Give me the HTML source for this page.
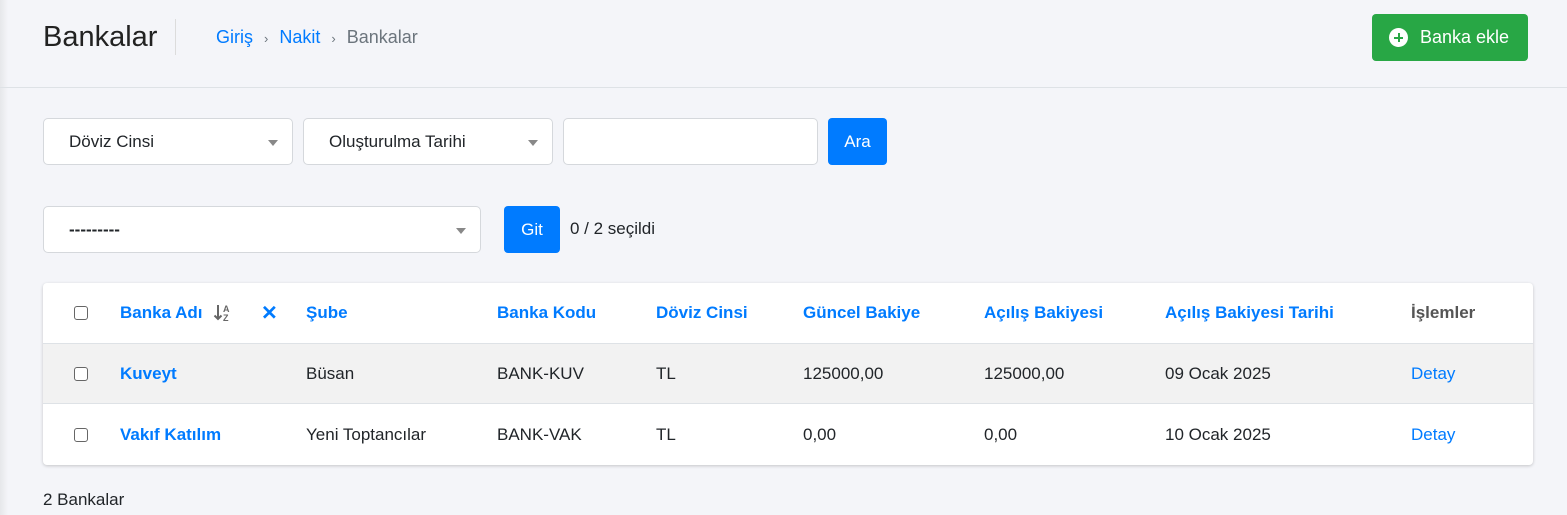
<!DOCTYPE html>
<html><head><meta charset="utf-8"><style>
*{box-sizing:border-box;margin:0;padding:0}
body{width:1567px;height:515px;overflow:hidden;background:#f4f5f9;font-family:"Liberation Sans",sans-serif;color:#212529;position:relative;font-size:16px}
.abs{position:absolute}
.hdr{left:0;top:0;width:1567px;height:88px;border-bottom:1px solid #dee2e6}
.sel{background:#fff;border:1px solid #d5d8dc;border-radius:5px;height:47px;display:flex;align-items:center;padding-left:25px;font-size:17px}
.car{position:absolute;right:14px;top:21px;width:0;height:0;border-left:5px solid transparent;border-right:5px solid transparent;border-top:6px solid #888}
.btn{background:#007bff;color:#fff;border-radius:4px;display:flex;align-items:center;justify-content:center;font-size:17px}
.card{left:43px;top:283px;width:1490px;height:182px;background:#fff;border-radius:4px;box-shadow:0 1px 3px rgba(0,0,0,.2)}
.row{position:absolute;left:0;width:1490px;height:61px}
.row span{position:absolute;top:50%;transform:translateY(-50%);white-space:nowrap;font-size:17px}
.b{color:#007bff;font-weight:bold}
.l{color:#007bff}
.cb{width:14px;height:14px;border:1px solid #666;border-radius:3px;background:#fff}
</style></head><body>
<div class="abs" style="left:0;top:0;width:8px;height:515px;background:linear-gradient(90deg,#e6e7ea,#f4f5f9)"></div>
<div class="abs hdr"></div>
<div class="abs" style="left:43px;top:21px;font-size:29px;color:#222">Bankalar</div>
<div class="abs" style="left:175px;top:19px;width:1px;height:36px;background:#dcdcdc"></div>
<div class="abs" style="left:216px;top:27px;font-size:18px;color:#6c757d"><span style="color:#007bff">Giriş</span> <span style="font-size:13px;margin:0 6px">›</span> <span style="color:#007bff">Nakit</span> <span style="font-size:13px;margin:0 6px">›</span> Bankalar</div>
<div class="abs" style="left:1372px;top:14px;width:156px;height:47px;background:#28a745;border-radius:4px;color:#fff;font-size:18px;display:flex;align-items:center">
<div style="width:19px;height:19px;border-radius:50%;background:#fff;margin-left:17px;margin-right:12px;position:relative"><div style="position:absolute;left:5px;top:8.5px;width:9px;height:2px;background:#28a745"></div><div style="position:absolute;left:8.5px;top:5px;width:2px;height:9px;background:#28a745"></div></div>Banka ekle</div>

<div class="abs sel" style="left:43px;top:118px;width:250px">Döviz Cinsi<div class="car"></div></div>
<div class="abs sel" style="left:303px;top:118px;width:250px">Oluşturulma Tarihi<div class="car"></div></div>
<div class="abs sel" style="left:563px;top:118px;width:255px"></div>
<div class="abs btn" style="left:828px;top:118px;width:59px;height:47px">Ara</div>

<div class="abs sel" style="left:43px;top:206px;width:438px;font-weight:bold">---------<div class="car"></div></div>
<div class="abs btn" style="left:504px;top:206px;width:56px;height:47px">Git</div>
<div class="abs" style="left:570px;top:219px;font-size:17px">0 / 2 seçildi</div>

<div class="abs card">
<div class="row" style="top:0;border-bottom:1px solid #dee2e6">
<span style="left:31px"><div class="cb"></div></span>
<span class="b" style="left:77px">Banka Adı</span>
<svg style="position:absolute;left:170px;top:20px" width="20" height="20" viewBox="0 0 20 20"><path d="M5 2v14M1.5 12.5L5 16l3.5-3.5" stroke="#666" stroke-width="2" fill="none"/><text x="10" y="9" font-size="9" font-weight="bold" fill="#666" font-family="Liberation Sans">A</text><text x="10" y="18" font-size="9" font-weight="bold" fill="#666" font-family="Liberation Sans">Z</text></svg>
<span class="b" style="left:218px;font-size:20px">✕</span>
<span class="b" style="left:263px">Şube</span>
<span class="b" style="left:454px">Banka Kodu</span>
<span class="b" style="left:613px">Döviz Cinsi</span>
<span class="b" style="left:760px">Güncel Bakiye</span>
<span class="b" style="left:941px">Açılış Bakiyesi</span>
<span class="b" style="left:1122px">Açılış Bakiyesi Tarihi</span>
<span style="left:1368px;font-weight:bold;color:#555">İşlemler</span>
</div>
<div class="row" style="top:61px;height:60px;background:#f2f2f2;border-bottom:1px solid #dee2e6">
<span style="left:31px"><div class="cb"></div></span>
<span class="b" style="left:77px">Kuveyt</span>
<span style="left:263px">Büsan</span>
<span style="left:454px">BANK-KUV</span>
<span style="left:613px">TL</span>
<span style="left:760px">125000,00</span>
<span style="left:941px">125000,00</span>
<span style="left:1122px">09 Ocak 2025</span>
<span class="l" style="left:1368px">Detay</span>
</div>
<div class="row" style="top:121px">
<span style="left:31px"><div class="cb"></div></span>
<span class="b" style="left:77px">Vakıf Katılım</span>
<span style="left:263px">Yeni Toptancılar</span>
<span style="left:454px">BANK-VAK</span>
<span style="left:613px">TL</span>
<span style="left:760px">0,00</span>
<span style="left:941px">0,00</span>
<span style="left:1122px">10 Ocak 2025</span>
<span class="l" style="left:1368px">Detay</span>
</div>
</div>
<div class="abs" style="left:43px;top:490px;font-size:17px">2 Bankalar</div>
</body></html>
